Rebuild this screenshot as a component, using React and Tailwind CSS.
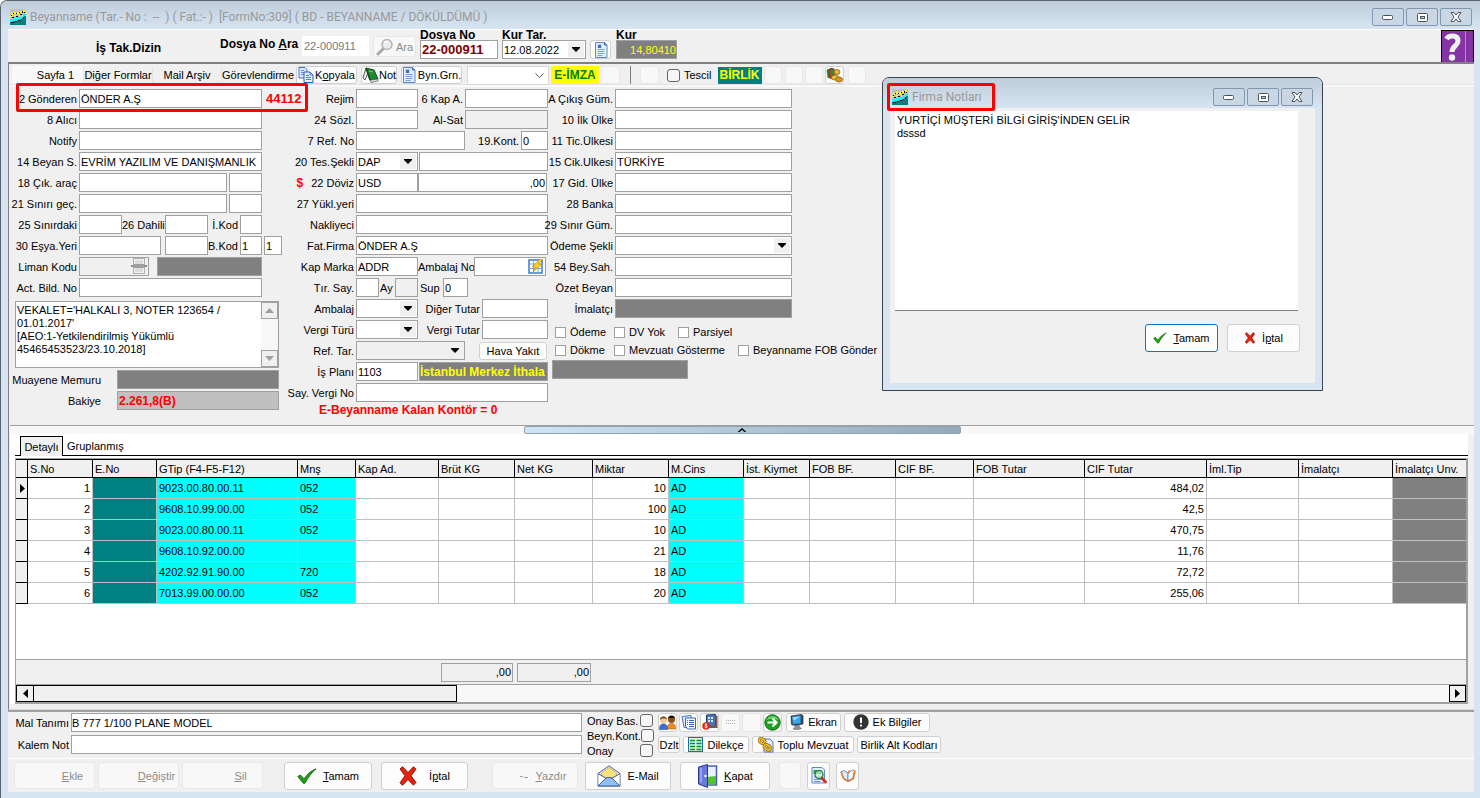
import React from 'react';
import clsx from 'clsx';

const columns = [
  { key: 'sno', title: 'S.No', width: 'w-[65px]', align: 'text-right' },
  { key: 'eno', title: 'E.No', width: 'w-[64px]', fill: 'bg-[#008080]' },
  { key: 'gtip', title: 'GTip (F4-F5-F12)', width: 'w-[141px]', fill: 'bg-[#00ffff]' },
  { key: 'mns', title: 'Mnş', width: 'w-[58px]', fill: 'bg-[#00ffff]' },
  { key: 'kap', title: 'Kap Ad.', width: 'w-[83px]' },
  { key: 'brut', title: 'Brüt KG', width: 'w-[76px]' },
  { key: 'net', title: 'Net KG', width: 'w-[78px]' },
  { key: 'miktar', title: 'Miktar', width: 'w-[76px]', align: 'text-right' },
  { key: 'cins', title: 'M.Cins', width: 'w-[75px]', fill: 'bg-[#00ffff]' },
  { key: 'kiymet', title: 'İst. Kiymet', width: 'w-[66px]' },
  { key: 'fobbf', title: 'FOB BF.', width: 'w-[86px]' },
  { key: 'cifbf', title: 'CIF BF.', width: 'w-[78px]' },
  { key: 'fob', title: 'FOB Tutar', width: 'w-[111px]' },
  { key: 'cif', title: 'CIF Tutar', width: 'w-[122px]', align: 'text-right' },
  { key: 'imltip', title: 'İml.Tip', width: 'w-[92px]' },
  { key: 'imalatci', title: 'İmalatçı', width: 'w-[94px]' },
  { key: 'unvan', title: 'İmalatçı Unv.', width: '', fill: 'bg-[#808080]' },
];

const rows = [
  { sno: 1, gtip: '9023.00.80.00.11', mns: '052', miktar: 10, cins: 'AD', cif: '484,02' },
  { sno: 2, gtip: '9608.10.99.00.00', mns: '052', miktar: 100, cins: 'AD', cif: '42,5' },
  { sno: 3, gtip: '9023.00.80.00.11', mns: '052', miktar: 10, cins: 'AD', cif: '470,75' },
  { sno: 4, gtip: '9608.10.92.00.00', mns: '', miktar: 21, cins: 'AD', cif: '11,76' },
  { sno: 5, gtip: '4202.92.91.90.00', mns: '720', miktar: 18, cins: 'AD', cif: '72,72' },
  { sno: 6, gtip: '7013.99.00.00.00', mns: '052', miktar: 20, cins: 'AD', cif: '255,06' },
];

/* ---------- icons ---------- */

function AppLogo() {
  return (
    <svg width="16" height="16" viewBox="0 0 16 16" shapeRendering="crispEdges" className="shrink-0">
      <rect width="16" height="16" fill="#c0c0c0" />
      <path d="M0 12h3v-1h4v-1h3V9h2V8h2V6h2v10H0z" fill="#008080" />
      <path d="M0 10h4V9h4V8h3V7h2V5h3v2h-2v2h-2v1h-2v1H7v1H3v1H0z" fill="#00ffff" />
      <path d="M1 4h2v2H1zM4 3h2v2H4zM7 3h2v2H7zM10 2h2v2h-2zM13 1h2v2h-2zM0 7h2v1H0zM4 6h2v1H4zM8 5h2v1H8z" fill="#ffff00" />
      <path d="M1 6h1v1H1zM3 4h1v1H3zM6 4h1v1H6zM9 3h1v1H9zM12 2h1v2h-1zM14 3h1v1h-1zM2 8h2v1H2zM6 7h2v1H6zM10 5h2v1h-2zM1 13h3v1H1zM5 12h2v1H5zM8 11h2v1H8zM11 10h1v1h-1zM13 8h1v2h-1z" fill="#000" />
    </svg>
  );
}

function Magnifier() {
  return (
    <svg width="18" height="18" viewBox="0 0 18 18" fill="none">
      <path d="M7.5 10.5L2 16" stroke="#a8a8a8" strokeWidth="3" strokeLinecap="round" />
      <circle cx="11" cy="6.5" r="5" fill="#ececec" stroke="#b4b4b4" strokeWidth="1.5" />
      <path d="M8.5 5.5a3 3 0 0 1 3-2" stroke="#fff" strokeWidth="1.5" />
    </svg>
  );
}

function CopyIcon() {
  return (
    <svg width="16" height="16" viewBox="0 0 16 16" fill="none">
      <path d="M1 .5h6l2 2V11H1z" fill="#dcebff" stroke="#3f6fc4" />
      <path d="M3 3.5h3M3 5.5h4M3 7.5h4" stroke="#5d90dc" />
      <path d="M6 5h6l3 3v7.5H6z" fill="#e8f2ff" stroke="#2d5cb8" />
      <path d="M12 5v3h3M8 8.5h3M8 10.5h5M8 12.5h5" stroke="#4a7fd4" />
    </svg>
  );
}

function BookIcon() {
  return (
    <svg width="17" height="16" viewBox="0 0 17 16">
      <path d="M4 1l8 2 4 9-8 1z" fill="#1e8a2c" stroke="#0b4f16" />
      <path d="M4 1L1 11l2 2 3-7z" fill="#f2f2f2" stroke="#555" />
      <path d="M8 13l8-1v2l-7 1.5z" fill="#ddd" stroke="#555" strokeWidth=".7" />
      <path d="M4 1l4 12" stroke="#0b4f16" strokeWidth="1.5" />
      <path d="M7 4l4 1" stroke="#7fd08a" />
    </svg>
  );
}

function DocIcon() {
  return (
    <svg width="14" height="16" viewBox="0 0 14 16" fill="none">
      <path d="M1.5.5h9L13 3v12.5H1.5z" fill="#e3efff" stroke="#5c86cc" />
      <path d="M10.5.5V3H13" stroke="#2f62bb" />
      <path d="M3.5 3h4M3.5 5h4M3.5 7.5h7M3.5 9.5h7M3.5 11.5h7M3.5 13.5h5" stroke="#7b9fdb" />
      <rect x="4" y="3" width="3" height="3" fill="#4570b8" />
    </svg>
  );
}

function PrintIcon() {
  return (
    <svg width="16" height="16" viewBox="0 0 16 16">
      <rect x="2.5" y=".5" width="11" height="15" fill="#f2f2f2" stroke="#b0b0b0" />
      <path d="M4 3h8M4 5h8M4 11h8M4 13h8" stroke="#c8c8c8" />
      <rect y="7" width="16" height="2" fill="#8c8c8c" />
      <rect x="3" y="6" width="10" height="4" fill="#a0a0a0" />
    </svg>
  );
}

function GridBoltIcon() {
  return (
    <svg width="16" height="15" viewBox="0 0 16 15">
      <rect x="1" y="1" width="13" height="13" fill="#fff" stroke="#3b78c8" strokeWidth="1.5" />
      <path d="M1 5h13M1 9.5h13M5.5 1v13M10 1v13" stroke="#7aa9e2" />
      <path d="M12 0L4 8h4l-3 5 9-8h-4l5-5z" fill="#ffd21c" stroke="#b97a00" strokeWidth=".6" />
    </svg>
  );
}

function MoneyIcon() {
  return (
    <svg width="17" height="15" viewBox="0 0 17 15">
      <path d="M1 2l5-2 1 8-5 2z" fill="#2c8c34" stroke="#15501b" strokeWidth=".6" />
      <path d="M3 1.5l5-1 1 9-5 1z" fill="#d33a26" stroke="#7c1c10" strokeWidth=".6" />
      <path d="M4.5 2l3-.5.7 7-3 .8z" fill="#2c8c34" />
      <ellipse cx="11" cy="4" rx="3" ry="2.5" fill="#e9b63a" stroke="#7a5204" strokeWidth=".7" />
      <ellipse cx="9" cy="9.5" rx="3.5" ry="2.5" fill="#f0bd3c" stroke="#7a5204" strokeWidth=".7" />
      <ellipse cx="13" cy="11.5" rx="3.5" ry="2.5" fill="#d99a1c" stroke="#7a5204" strokeWidth=".7" />
    </svg>
  );
}

function UsersIcon() {
  return (
    <svg width="17" height="15" viewBox="0 0 17 15">
      <circle cx="12.5" cy="4.5" r="3.5" fill="#8a4f22" />
      <path d="M9 4a3.5 3.5 0 0 1 7 0l-1-1h-5z" fill="#1c1208" />
      <path d="M8.5 14c0-4 1-5.5 4-5.5s4 1.5 4 5.5z" fill="#ef8a1d" stroke="#a65706" strokeWidth=".5" />
      <circle cx="4.5" cy="5" r="3.5" fill="#f6c79a" />
      <path d="M1 5a3.5 3.5 0 0 1 7 0L7 3.5H3z" fill="#7c4414" />
      <path d="M.5 14.5c0-4 1-5.5 4-5.5s4 1.5 4 5.5z" fill="#3c6fd2" stroke="#1d428f" strokeWidth=".5" />
    </svg>
  );
}

function ListDocsIcon() {
  return (
    <svg width="16" height="15" viewBox="0 0 16 15" fill="none">
      <path d="M1 1.5l9-1 1 11-8 1z" fill="#dfeaff" stroke="#4573c6" />
      <path d="M4.5 3h10v11h-8l-2-3z" fill="#f4f8ff" stroke="#3a66b8" />
      <path d="M8 5.5h5M8 7.5h5M8 9.5h5M8 11.5h5" stroke="#3a66b8" />
      <path d="M6 5.5h1M6 7.5h1M6 9.5h1" stroke="#3a66b8" />
    </svg>
  );
}

function SafeIcon() {
  return (
    <svg width="16" height="16" viewBox="0 0 16 16">
      <path d="M4.5 1l9-.5V12l-9 1z" fill="#4d74b4" stroke="#223f74" />
      <path d="M6 3h2v2H6zM9 3h2v2H9zM6 6h2v2H6zM9 6h2v2H9z" fill="#dbe8ff" />
      <path d="M13.5 1l2 1v12H6l1-1.5 6.5-.5z" fill="#7b5a4c" />
      <circle cx="4" cy="12" r="3.7" fill="#e02214" />
      <path d="M5.3 10.5c-1-.8-2.6-.4-2.5.5.2 1 2.5.6 2.5 1.7s-1.9 1.2-2.7.4M4 9.5v5" stroke="#fff" fill="none" strokeWidth=".8" />
    </svg>
  );
}

function GoIcon() {
  return (
    <svg width="17" height="17" viewBox="0 0 17 17">
      <circle cx="8.5" cy="8.5" r="7.7" fill="#1fa01f" stroke="#0d6a12" />
      <path d="M2.5 6a6.5 6.5 0 0 1 12 0c-4-2-8-2-12 0z" fill="#6fd06a" />
      <path d="M3.5 8.5H12M8.5 4.5l4 4-4 4" stroke="#fff" strokeWidth="2.2" fill="none" />
    </svg>
  );
}

function MonitorIcon() {
  return (
    <svg width="14" height="16" viewBox="0 0 14 16">
      <path d="M1 2l10-1.5 2 1V10l-8 1.5-3.5-1z" fill="#3c4c60" stroke="#1d2b3c" strokeWidth=".7" />
      <path d="M2 2.8l8.5-1.3v7.7L3 10z" fill="#35a8f0" />
      <path d="M2.5 3.5l7.5-1-6 4z" fill="#9fdcff" />
      <path d="M6 11.5l3-.5 1 2.5 1.5 1-4 1.5L3 15z" fill="#8a949e" stroke="#56626f" strokeWidth=".5" />
    </svg>
  );
}

function AlertIcon() {
  return (
    <svg width="16" height="16" viewBox="0 0 16 16">
      <circle cx="8" cy="8" r="7.7" fill="#333" />
      <path d="M7 3.5h2V9H7zM7 10.5h2v2H7z" fill="#fff" />
    </svg>
  );
}

function ColumnsIcon() {
  return (
    <svg width="15" height="15" viewBox="0 0 15 15">
      <rect x=".5" y=".5" width="14" height="14" fill="#d9f7dc" stroke="#1f6f9a" />
      <path d="M2 3.5h5M2 6.5h5M2 9.5h5M2 12.5h5M8.500 3.500h5M8.500 6.500h5M8.500 9.500h5M8.500 12.500h5" stroke="#148a2a" strokeWidth="1.5" />
    </svg>
  );
}

function LinksIcon() {
  return (
    <svg width="16" height="16" viewBox="0 0 16 16" fill="none">
      <path d="M6 2h6l3 3v10H6z" fill="#e4edff" stroke="#4b77c4" />
      <path d="M9 8h4M9 10.5h4M9 13h4" stroke="#7fa4e0" />
      <rect x="1" y="2" width="6" height="4" rx="2" transform="rotate(35 4 4)" stroke="#8a6200" strokeWidth="3" />
      <rect x="1" y="2" width="6" height="4" rx="2" transform="rotate(35 4 4)" stroke="#f2bd20" strokeWidth="1.8" />
      <rect x="6" y="8" width="7" height="4" rx="2" transform="rotate(35 9 10)" stroke="#8a6200" strokeWidth="3" />
      <rect x="6" y="8" width="7" height="4" rx="2" transform="rotate(35 9 10)" stroke="#f2bd20" strokeWidth="1.8" />
    </svg>
  );
}

function CheckIcon({ className }) {
  return (
    <svg viewBox="0 0 20 16" className={className}>
      <path d="M.8 8.5L3.5 7 7 11C10 6.5 14 2.5 19 .8 14.5 4.8 10.5 10 8 15.3H6.3z" fill="#22a016" stroke="#0e5a0a" strokeWidth=".8" />
    </svg>
  );
}

function CrossIcon({ className }) {
  return (
    <svg viewBox="0 0 18 20" className={className}>
      <path d="M1 3L3.500.7 9 6.500 14.500.8 17 3.200 12 9.800l5 6.700-2.600 2.700L9 13.500l-5.500 5.800L1 16.800l5-7z" fill="#e8200c" stroke="#7e0f06" strokeWidth=".9" strokeLinejoin="round" />
    </svg>
  );
}

function EnvelopeIcon() {
  return (
    <svg width="24" height="22" viewBox="0 0 24 22">
      <path d="M1 8.5L12 .8l11 7.700V21H1z" fill="#e8eefc" stroke="#4a5f9c" />
      <path d="M4.500 8L12 2.500 19.500 8v4L12 16l-7.500-4z" fill="#fbe27a" stroke="#c89f24" strokeWidth=".6" />
      <path d="M1.500 9.500V20l7-6.500zM22.500 9.500V20l-7-6.500z" fill="#fff" />
      <path d="M1 21l8.500-8.500h5L23 21z" fill="#8fc1f4" stroke="#4a5f9c" />
      <path d="M1 8.500l8.500 5M23 8.500l-8.500 5" stroke="#4a5f9c" fill="none" />
    </svg>
  );
}

function DoorIcon() {
  return (
    <svg width="21" height="24" viewBox="0 0 21 24">
      <rect x="9" y="2" width="10.5" height="19" fill="#e6f1ff" stroke="#4560b0" strokeWidth="1.5" />
      <path d="M10 13l9-1v8.500h-9z" fill="#52c234" />
      <path d="M1.500 3L10.500.5v23L1.500 20z" fill="#6a78dc" stroke="#2b3790" />
      <path d="M3 4.500l2-.5v15l-2-.8z" fill="#97a3f2" />
      <circle cx="8.5" cy="12" r="1.2" fill="#fff" />
    </svg>
  );
}

function FindDocIcon() {
  return (
    <svg width="16" height="17" viewBox="0 0 16 17">
      <path d="M1 .5h10L13.500 3v13H1z" fill="#e4eeff" stroke="#5d86cc" />
      <path d="M3 10h8M3 12.500h8M3 14.500h6" stroke="#6f97d8" />
      <path d="M2.500 3h8v4h-8z" fill="#2e9c4a" />
      <path d="M10.500 10.500l4 4.500" stroke="#d2381e" strokeWidth="3" strokeLinecap="round" />
      <circle cx="8" cy="7.5" r="4" fill="#bdeccb" fillOpacity=".7" stroke="#20703a" strokeWidth="1.2" />
    </svg>
  );
}

function OpenBookIcon() {
  return (
    <svg width="16" height="13" viewBox="0 0 16 13">
      <path d="M1 3l3-1.500 4 2.500v8L3.500 9z" fill="#dceafa" stroke="#5289cc" strokeWidth=".9" />
      <path d="M8 4l4.500-3 2 .8L13 9l-5 3z" fill="#f7fbff" stroke="#5289cc" strokeWidth=".9" />
      <path d="M1 2.500l2.500 7L8 12.500l5.500-3 1.500-8M9.500 1.500l-1.500 3" stroke="#e8762c" strokeWidth="1.5" fill="none" />
    </svg>
  );
}

function HelpIcon() {
  return (
    <svg width="33" height="33" viewBox="0 0 33 33">
      <rect x=".5" y=".5" width="32" height="32" fill="#8434a4" stroke="#000" />
      <path d="M24.500 1v31" stroke="#b98acb" />
      <path d="M5.500 9C8 5 17 4.500 17 11c0 5-6 5-6 11" stroke="#f0f0f0" strokeWidth="5" fill="none" />
      <circle cx="11" cy="27.500" r="3.2" fill="#f0f0f0" />
    </svg>
  );
}

/* ---------- small controls ---------- */

function Field({ className, ...props }) {
  return (
    <input
      type="text"
      className={clsx('h-[19px] min-w-0 shrink-0 border border-[#a0a0a0] leading-4 outline-none', className)}
      {...props}
    />
  );
}

function Combo({ id, value, className, label }) {
  return (
    <span className={clsx('relative block h-[19px] shrink-0 border border-[#a0a0a0]', className)}>
      <select
        id={id}
        aria-label={label}
        defaultValue={value}
        className="block size-full appearance-none bg-transparent pl-px leading-4 outline-none"
      >
        <option>{value}</option>
      </select>
      <span className="pointer-events-none absolute inset-y-px right-px flex w-4 items-center justify-center bg-[#f0f0f0]">
        <svg width="8" height="5" viewBox="0 0 8 5"><path d="M0 0h8v1L4 5 0 1z" /></svg>
      </span>
    </span>
  );
}

function Row({ id, label, labelClass, className, children }) {
  return (
    <div className={clsx('relative flex h-[19px] items-center', className)}>
      <label htmlFor={id} className={clsx('mr-0.5 flex shrink-0 justify-end whitespace-nowrap', labelClass)}>
        {label}
      </label>
      {children}
    </div>
  );
}

function Mid({ htmlFor, children }) {
  return (
    <label htmlFor={htmlFor} className="flex-1 whitespace-nowrap pr-0.5 text-right">
      {children}
    </label>
  );
}

function Btn({ className, disabled, children, ...props }) {
  return (
    <button
      type="button"
      disabled={disabled}
      className={clsx(
        'flex shrink-0 items-center justify-center whitespace-nowrap rounded-[3px] border [&>svg]:shrink-0',
        disabled ? 'border-[#e8e8e8] bg-[#f8f8f8] text-[#8c8c8c]' : 'bg-[#fdfdfd]',
        className
      )}
      {...props}
    >
      {children}
    </button>
  );
}

function Check({ label, className }) {
  return (
    <label className={clsx('flex items-center gap-1 whitespace-nowrap', className)}>
      <input type="checkbox" className="size-[11px] shrink-0 appearance-none border border-[#a0a0a0] bg-white" />
      {label}
    </label>
  );
}

function WindowButtons() {
  const box = 'flex h-[18px] w-8 items-center justify-center rounded-[2px] border border-[#8496b0] bg-[#c9d6e4]';
  return (
    <div className="flex gap-0.5">
      <button type="button" aria-label="Küçült" className={box}>
        <svg width="12" height="5"><rect x=".5" y=".5" width="10" height="4" rx="1" fill="#fff" stroke="#4c525c" /></svg>
      </button>
      <button type="button" aria-label="Büyüt" className={box}>
        <svg width="11" height="9">
          <rect x=".5" y=".5" width="10" height="8" rx="1" fill="#fff" stroke="#4c525c" />
          <rect x="3.5" y="3.5" width="4" height="2" fill="#c9d6e4" stroke="#4c525c" />
        </svg>
      </button>
      <button type="button" aria-label="Kapat" className={box}>
        <svg width="12" height="10" viewBox="0 0 12 10">
          <path d="M1 .5h3L6 3 8 .5h3L8 5l3 4.500H8L6 7 4 9.500H1L4 5z" fill="#fff" stroke="#4c525c" />
        </svg>
      </button>
    </div>
  );
}

/* ---------- sections ---------- */

function Header() {
  return (
    <header className="flex h-[33px] justify-between border-t border-white">
      <div className="flex items-start">
        <b className="ml-[88px] w-[124px] pt-2.5 text-[12px]">İş Tak.Dizin</b>
        <label htmlFor="ara" className="w-[82px] whitespace-nowrap pt-1.5 text-[12px] font-bold">
          Dosya No <u>A</u>ra
        </label>
        <input id="ara" defaultValue="22-000911" className="mt-1.5 h-5 w-[67px] bg-white px-0.5 text-[#777] outline-none" />
        <Btn disabled className="ml-1 mt-1.5 h-[21px] w-[43px] gap-0.5"><Magnifier />Ara</Btn>
        <div className="ml-1 flex w-[82px] flex-col">
          <label htmlFor="dosya" className="h-2.5 text-[12px] font-bold leading-[10px]">Dosya No</label>
          <Field id="dosya" defaultValue="22-000911" className="w-[78px] bg-white px-px text-[13px] font-bold text-[#800000]" />
        </div>
        <div className="flex w-[88px] flex-col">
          <label htmlFor="kurtar" className="h-2.5 text-[12px] font-bold leading-[10px]">Kur Tar.</label>
          <Combo id="kurtar" value="12.08.2022" className="w-[84px] bg-white" />
        </div>
        <Btn aria-label="Kur listesi" className="mt-2.5 h-[19px] w-[21px] border-[#d0d0d0]"><DocIcon /></Btn>
        <div className="ml-[5px] flex flex-col">
          <label htmlFor="kur" className="h-2.5 text-[12px] font-bold leading-[10px]">Kur</label>
          <Field id="kur" defaultValue="14,80410" className="w-[61px] bg-[#808080] text-right text-[#ffff00]" />
        </div>
      </div>
      <button type="button" aria-label="Yardım" className="h-[33px] w-[33px]"><HelpIcon /></button>
    </header>
  );
}

function TabRow() {
  return (
    <div className="flex h-5 items-center pt-0.5">
      <div role="tablist" className="flex h-full items-center">
        <button role="tab" type="button" className="ml-0.5 h-full w-[71px] bg-[#f9f9f9] pl-4">Sayfa 1</button>
        <button role="tab" type="button" className="w-[69px] whitespace-nowrap border-l border-[#e4e4e4]">Diğer Formlar</button>
        <button role="tab" type="button" className="w-[69px] border-l border-[#e4e4e4]">Mail Arşiv</button>
        <button role="tab" type="button" className="w-[70px] whitespace-nowrap border-l border-[#e4e4e4] text-left">Görevlendirme</button>
      </div>
      <Btn className="ml-[5px] h-[18px] w-[61px] gap-px border-[#d0d0d0]"><CopyIcon /><span>K<u>o</u>pyala</span></Btn>
      <Btn className="ml-1 h-[18px] w-9 border-[#d0d0d0]"><BookIcon />Not</Btn>
      <Btn className="ml-1 h-[18px] w-[61px] gap-0.5 border-[#d0d0d0]"><DocIcon />Byn.Grn.</Btn>
      <span className="relative ml-[5px] block h-[19px] w-[82px] shrink-0 border border-[#d8d8d8] bg-white">
        <select aria-label="Beyanname türü" className="block size-full appearance-none outline-none"><option></option></select>
        <svg className="pointer-events-none absolute right-1 top-1.5" width="9" height="6" fill="none" stroke="#555"><path d="M.5.5l4 4 4-4" /></svg>
      </span>
      <b className="ml-0.5 h-[18px] w-12 bg-[#ffff00] text-center text-[12px] leading-[18px] text-[#008000]">E-İMZA</b>
      <Btn disabled aria-label="Boş" className="ml-0.5 h-[18px] w-[19px]" />
      <i className="ml-2.5 h-[18px] w-px bg-[#808080]" />
      <Btn disabled aria-label="Boş" className="ml-[9px] h-[18px] w-[19px]" />
      <label className="ml-2 flex items-center gap-1">
        <input type="checkbox" className="size-[13px] shrink-0 appearance-none rounded-[3px] border border-[#666] bg-[#f6f6f6]" />
        Tescil
      </label>
      <b className="ml-1.5 h-[17px] w-11 bg-[#008080] text-center text-[12px] leading-[17px] text-[#ffff00]">BİRLİK</b>
      <Btn disabled aria-label="Boş" className="ml-0.5 h-[18px] w-[18px]" />
      <Btn disabled aria-label="Boş" className="ml-[3px] h-[18px] w-[18px]" />
      <Btn disabled aria-label="Boş" className="ml-0.5 h-[18px] w-[18px]" />
      <Btn aria-label="Ödemeler" className="ml-0.5 h-[18px] w-[19px] border-[#d0d0d0]"><MoneyIcon /></Btn>
      <Btn disabled aria-label="Boş" className="ml-1 h-[18px] w-[18px]" />
    </div>
  );
}

function LeftColumn() {
  const lw = 'w-[67px]';
  return (
    <div className="flex w-[269px] shrink-0 flex-col gap-0.5">
      <Row id="f2" label="2 Gönderen" labelClass={lw}>
        <Field id="f2" defaultValue="ÖNDER A.Ş" className="w-[183px] bg-white px-px" />
        <b className="ml-1 text-[13px] text-[#ff0000]">44112</b>
        <span className="pointer-events-none absolute -bottom-1 -top-1.5 left-1.5 z-10 w-[292px] rounded-[2px] border-3 border-[#ff0000]" />
      </Row>
      <Row id="f8" label="8 Alıcı" labelClass={lw}><Field id="f8" className="w-[183px] bg-white" /></Row>
      <Row id="fn" label="Notify" labelClass={lw}><Field id="fn" className="w-[183px] bg-white" /></Row>
      <Row id="f14" label="14 Beyan S." labelClass={lw}>
        <Field id="f14" defaultValue="EVRİM YAZILIM VE DANIŞMANLIK" className="w-[183px] bg-white px-px" />
      </Row>
      <Row id="f18" label="18 Çık. araç" labelClass={lw}>
        <Field id="f18" className="w-[148px] bg-white" />
        <Field aria-label="Çıkış ülke" className="ml-0.5 w-[33px] bg-white" />
      </Row>
      <Row id="f21" label="21 Sınırı geç." labelClass={lw}>
        <Field id="f21" className="w-[148px] bg-white" />
        <Field aria-label="Sınır ülke" className="ml-0.5 w-[33px] bg-white" />
      </Row>
      <Row id="f25" label="25 Sınırdaki" labelClass={lw}>
        <Field id="f25" className="w-[43px] bg-white" />
        <label htmlFor="f26" className="w-[43px] whitespace-nowrap">26 Dahili</label>
        <Field id="f26" className="w-[43px] bg-white" />
        <label htmlFor="ikod" className="w-8 pr-0.5 text-right">İ.Kod</label>
        <Field id="ikod" className="w-[22px] bg-white" />
      </Row>
      <Row id="f30" label="30 Eşya.Yeri" labelClass={lw}>
        <Field id="f30" className="w-[82px] bg-white" />
        <Field aria-label="Eşya yeri adı" className="ml-1 w-[43px] bg-white" />
        <label htmlFor="bkod" className="w-8 pr-0.5 text-right">B.Kod</label>
        <Field id="bkod" defaultValue="1" className="w-[22px] bg-white px-px" />
        <Field aria-label="B.Kod 2" defaultValue="1" className="ml-0.5 w-[18px] bg-white px-px" />
      </Row>
      <Row id="liman" label="Liman Kodu" labelClass={lw}>
        <span className="relative block">
          <Field id="liman" className="block w-[70px] bg-[#f0f0f0]" />
          <span className="absolute right-0.5 top-px"><PrintIcon /></span>
        </span>
        <Field aria-label="Liman" readOnly className="ml-2 w-[105px] bg-[#808080]" />
      </Row>
      <Row id="act" label="Act. Bild. No" labelClass={lw}><Field id="act" className="w-[183px] bg-white" /></Row>
      <div className="ml-[5px] mt-0.5 flex h-[67px] w-[264px] border border-[#a0a0a0] bg-white">
        <textarea
          aria-label="Vekalet"
          className="h-full flex-1 resize-none overflow-hidden pl-px pt-0.5 leading-[13px] outline-none"
          defaultValue={"VEKALET='HALKALI 3, NOTER 123654 /\n01.01.2017'\n[AEO:1-Yetkilendirilmiş Yükümlü\n45465453523/23.10.2018]"}
        />
        <div className="flex w-[17px] flex-col justify-between bg-[#f8f8f8]">
          <button type="button" aria-label="Yukarı" className="flex h-[17px] items-center justify-center border border-[#a0a0a0] bg-[#f0f0f0]">
            <svg width="9" height="5"><path d="M0 5l4.500-5L9 5z" fill="#a0a0a0" /></svg>
          </button>
          <button type="button" aria-label="Aşağı" className="flex h-[17px] items-center justify-center border border-[#a0a0a0] bg-[#f0f0f0]">
            <svg width="9" height="5"><path d="M0 0l4.500 5L9 0z" fill="#a0a0a0" /></svg>
          </button>
        </div>
      </div>
      <Row id="muayene" label="Muayene Memuru" labelClass="w-[91px]">
        <Field id="muayene" readOnly className="ml-3.5 w-[162px] bg-[#808080]" />
      </Row>
      <Row id="bakiye" label="Bakiye" labelClass="w-[91px]">
        <Field id="bakiye" readOnly defaultValue="2.261,8(B)" className="ml-3.5 w-[162px] bg-[#c0c0c0] px-px text-[12px] font-bold text-[#ff0000]" />
      </Row>
    </div>
  );
}

function MiddleColumn() {
  const lw = 'w-[75px]';
  return (
    <div className="flex w-[269px] shrink-0 flex-col gap-0.5">
      <Row id="rejim" label="Rejim" labelClass={lw}>
        <Field id="rejim" className="w-[62px] bg-white" />
        <Mid htmlFor="kapa">6 Kap A.</Mid>
        <Field id="kapa" className="w-[83px] bg-white" />
      </Row>
      <Row id="f24" label="24 Sözl." labelClass={lw}>
        <Field id="f24" className="w-[62px] bg-white" />
        <Mid htmlFor="alsat">Al-Sat</Mid>
        <Field id="alsat" className="w-[83px] bg-[#f0f0f0]" />
      </Row>
      <Row id="f7" label="7 Ref. No" labelClass={lw}>
        <Field id="f7" className="w-[109px] bg-white" />
        <Mid htmlFor="f19">19.Kont.</Mid>
        <Field id="f19" defaultValue="0" className="w-[27px] bg-white px-px" />
      </Row>
      <Row id="f20" label="20 Tes.Şekli" labelClass={lw}>
        <Combo id="f20" value="DAP" className="w-[62px] bg-white" />
        <Field aria-label="Teslim yeri" className="ml-px w-[129px] bg-white" />
      </Row>
      <Row id="f22" label={<><b className="mr-2 text-[12px] text-[#ff0000]">$</b>22 Döviz</>} labelClass={lw}>
        <Field id="f22" defaultValue="USD" className="w-[62px] bg-white px-px" />
        <Field aria-label="Döviz tutarı" defaultValue=",00" className="w-[129px] bg-white px-px text-right" />
      </Row>
      <Row id="f27" label="27 Yükl.yeri" labelClass={lw}><Field id="f27" className="w-48 bg-white" /></Row>
      <Row id="nak" label="Nakliyeci" labelClass={lw}><Field id="nak" className="w-48 bg-white" /></Row>
      <Row id="fat" label="Fat.Firma" labelClass={lw}><Field id="fat" defaultValue="ÖNDER A.Ş" className="w-48 bg-white px-px" /></Row>
      <Row id="marka" label="Kap Marka" labelClass={lw}>
        <Field id="marka" defaultValue="ADDR" className="w-[62px] bg-white px-px" />
        <label htmlFor="ambno" className="w-14 whitespace-nowrap">Ambalaj No</label>
        <span className="relative block">
          <Field id="ambno" className="block w-[72px] bg-white" />
          <button type="button" aria-label="Ambalaj seç" className="absolute right-0.5 top-0.5"><GridBoltIcon /></button>
        </span>
      </Row>
      <Row id="tir" label="Tır. Say." labelClass={lw}>
        <Field id="tir" className="w-[23px] bg-white" />
        <label htmlFor="ay" className="w-4 pl-px">Ay</label>
        <Field id="ay" className="w-[23px] bg-[#f0f0f0]" />
        <label htmlFor="sup" className="w-[25px] pl-0.5">Sup</label>
        <Field id="sup" defaultValue="0" className="w-[25px] bg-white px-px" />
      </Row>
      <Row id="amb" label="Ambalaj" labelClass={lw}>
        <Combo id="amb" value="" className="w-[62px] bg-white" />
        <Mid htmlFor="diger">Diğer Tutar</Mid>
        <Field id="diger" className="w-[66px] bg-white" />
      </Row>
      <Row id="vturu" label="Vergi Türü" labelClass={lw}>
        <Combo id="vturu" value="" className="w-[62px] bg-white" />
        <Mid htmlFor="vtutar">Vergi Tutar</Mid>
        <Field id="vtutar" className="w-[66px] bg-white" />
      </Row>
      <Row id="reftar" label="Ref. Tar." labelClass={lw}>
        <Combo id="reftar" value="" className="w-[109px] bg-[#f0f0f0]" />
        <Btn className="ml-3.5 h-[18px] w-[68px] border-[#d0d0d0]">Hava Yakıt</Btn>
      </Row>
      <Row id="plan" label="İş Planı" labelClass={lw}>
        <Field id="plan" defaultValue="1103" className="w-[62px] bg-white px-px" />
        <Field aria-label="İş planı adı" readOnly defaultValue="İstanbul Merkez İthala" className="ml-px w-[129px] bg-[#808080] text-[12px] font-bold text-[#ffff00]" />
      </Row>
      <Row id="say" label="Say. Vergi No" labelClass={lw}><Field id="say" className="w-48 bg-white" /></Row>
      <b className="ml-10 whitespace-nowrap text-[12px] leading-3 text-[#ff0000]">E-Beyanname Kalan Kontör = 0</b>
    </div>
  );
}

function RightColumn() {
  const lw = 'w-[65px]';
  const w = 'w-[177px] bg-white';
  return (
    <div className="flex shrink-0 flex-col gap-0.5">
      <Row id="acik" label="A Çıkış Güm." labelClass={lw}><Field id="acik" className={w} /></Row>
      <Row id="f10" label="10 İlk Ülke" labelClass={lw}><Field id="f10" className={w} /></Row>
      <Row id="f11" label="11 Tic.Ülkesi" labelClass={lw}><Field id="f11" className={w} /></Row>
      <Row id="f15" label="15 Cik.Ulkesi" labelClass={lw}>
        <Field id="f15" defaultValue="TÜRKİYE" className="w-[177px] bg-white px-px" />
      </Row>
      <Row id="f17" label="17 Gid. Ülke" labelClass={lw}><Field id="f17" className={w} /></Row>
      <Row id="f28" label="28 Banka" labelClass={lw}><Field id="f28" className={w} /></Row>
      <Row id="f29" label="29 Sınır Güm." labelClass={lw}><Field id="f29" className={w} /></Row>
      <Row id="odeme" label="Ödeme Şekli" labelClass={lw}><Combo id="odeme" value="" className={w} /></Row>
      <Row id="f54" label="54 Bey.Sah." labelClass={lw}><Field id="f54" className={w} /></Row>
      <Row id="ozet" label="Özet Beyan" labelClass={lw}><Field id="ozet" className={w} /></Row>
      <Row id="imal" label="İmalatçı" labelClass={lw}>
        <Field id="imal" readOnly className="w-[177px] bg-[#808080]" />
      </Row>
      <div className="ml-[7px] mt-1 flex h-4">
        <Check label="Ödeme" className="w-[59px]" />
        <Check label="DV Yok" className="w-16" />
        <Check label="Parsiyel" />
      </div>
      <div className="ml-[7px] flex h-4">
        <Check label="Dökme" className="w-[59px]" />
        <Check label="Mevzuatı Gösterme" className="w-[124px]" />
        <Check label="Beyanname FOB Gönder" />
      </div>
      <Field aria-label="Plan açıklaması" readOnly className="ml-1 w-[136px] bg-[#808080]" />
    </div>
  );
}

function NotesWindow() {
  return (
    <section className="absolute left-[881px] top-[76px] z-20 flex h-[314px] w-[441px] flex-col rounded-t-[7px] border border-[#3c4450] bg-[#d7e4f2] px-[7px] pb-[7px]">
      <div className="-mx-[7px] flex h-[30px] items-center justify-between rounded-t-[6px] bg-linear-to-b from-[#bfcddb] to-[#d7e4f2] pl-[9px] pr-[9px] pt-2">
        <div className="relative flex items-center gap-1 font-[Roboto,'Open_Sans',sans-serif] text-[12px] text-[#999]">
          <AppLogo />
          Firma Notları
          <span className="pointer-events-none absolute -left-[5px] -top-[6px] h-[28px] w-[108px] rounded-[2px] border-3 border-[#ff0000]" />
        </div>
        <WindowButtons />
      </div>
      <div className="flex flex-1 flex-col bg-[#f0f0f0] px-[5px] pt-[3px]">
        <textarea
          aria-label="Firma notu"
          className="mr-3 h-[200px] resize-none border-b border-[#808080] bg-white pl-0.5 pt-[3px] leading-[13px] outline-none"
          defaultValue={"YURTİÇİ MÜŞTERİ BİLGİ GİRİŞ'İNDEN GELİR\ndsssd"}
        />
        <div className="mr-2.5 mt-[13px] flex justify-end gap-[9px]">
          <Btn className="h-7 w-[73px] gap-1.5 border-[#0078d4]"><CheckIcon className="h-3 w-[14px]" /><span><u>T</u>amam</span></Btn>
          <Btn className="h-7 w-[73px] gap-1.5 border-[#d0d0d0]"><CrossIcon className="h-3 w-3" /><span>İ<u>p</u>tal</span></Btn>
        </div>
      </div>
    </section>
  );
}

function ItemTable() {
  return (
    <table className="w-full table-fixed border-separate border-spacing-0">
      <colgroup>
        <col className="w-3" />
        {columns.map((c) => <col key={c.key} className={c.width} />)}
      </colgroup>
      <thead>
        <tr className="h-[19px]">
          <th className="border-b border-r border-t border-black bg-[#f0f0f0] p-0" />
          {columns.map((c) => (
            <th key={c.key} className="whitespace-nowrap border-b border-r border-t border-black bg-[#f0f0f0] p-0 pl-0.5 text-left font-normal leading-4 last:border-r-0">
              {c.title}
            </th>
          ))}
        </tr>
      </thead>
      <tbody>
        {rows.map((r, i) => (
          <tr key={r.sno} className="h-[21px]">
            <td className="border-b border-r border-black bg-[#f0f0f0] p-0 pl-1">
              {i === 0 && <svg width="5" height="9"><path d="M0 0l5 4.500L0 9z" /></svg>}
            </td>
            {columns.map((c) => (
              <td
                key={c.key}
                className={clsx('border-b border-r border-[#c0c0c0] p-0 px-0.5 leading-4 last:border-r-0', c.align, c.fill)}
              >
                {r[c.key]}
              </td>
            ))}
          </tr>
        ))}
      </tbody>
    </table>
  );
}

function ItemGrid() {
  return (
    <section className="mr-1.5 flex flex-1 flex-col bg-white pl-[5px] pt-0.5">
      <div role="tablist" className="flex h-5 items-end border-b border-black pl-[5px]">
        <button role="tab" type="button" className="-mb-px h-5 w-[43px] border border-b-0 border-black bg-[#f0f0f0]">Detaylı</button>
        <button role="tab" type="button" className="h-[18px] px-1">Gruplanmış</button>
      </div>
      <div className="mt-0.5 flex flex-1 flex-col border-b-2 border-l border-r-2 border-t border-[#a0a0a0]">
        <div className="flex-1"><ItemTable /></div>
        <div className="flex h-[26px] items-center gap-1 border-y border-[#a0a0a0] bg-[#f0f0f0] pl-[425px]">
          <Field aria-label="Brüt toplam" readOnly defaultValue=",00" className="w-[72px] px-px text-right" />
          <Field aria-label="Net toplam" readOnly defaultValue=",00" className="w-[74px] px-px text-right" />
        </div>
        <div className="flex h-[17px] justify-between bg-[#f8f8f8]">
          <button type="button" aria-label="Sola" className="flex w-[18px] items-center justify-center border border-black bg-[#f0f0f0]">
            <svg width="5" height="9"><path d="M5 0L0 4.500 5 9z" /></svg>
          </button>
          <div className="-ml-px w-[424px] border border-black bg-[#f0f0f0]" />
          <div className="flex-1" />
          <button type="button" aria-label="Sağa" className="flex w-[17px] items-center justify-center border border-black bg-[#f0f0f0]">
            <svg width="5" height="9"><path d="M0 0l5 4.500L0 9z" /></svg>
          </button>
        </div>
      </div>
    </section>
  );
}

function ApproveCheck({ label }) {
  return (
    <label className="flex h-[15px] w-[66px] items-center justify-between whitespace-nowrap">
      {label}
      <input type="checkbox" className="size-[13px] shrink-0 appearance-none rounded-[3px] border border-[#666] bg-[#f6f6f6]" />
    </label>
  );
}

function DetailPanel() {
  return (
    <section className="flex h-12 border-t-2 border-[#a0a0a0] pt-px">
      <div className="flex flex-col gap-[3px]">
        <Row id="mal" label="Mal Tanımı" labelClass="w-[61px]">
          <Field id="mal" defaultValue="B 777 1/100 PLANE MODEL" className="w-[511px] bg-white" />
        </Row>
        <Row id="kalem" label="Kalem Not" labelClass="w-[61px]"><Field id="kalem" className="w-[511px] bg-white" /></Row>
      </div>
      <div className="ml-[5px] flex flex-col">
        <ApproveCheck label="Onay Bas." />
        <ApproveCheck label="Beyn.Kont." />
        <ApproveCheck label="Onay" />
      </div>
      <div className="ml-[5px] flex flex-col gap-[5px]">
        <div className="flex h-[18px] items-center gap-0.5">
          <Btn aria-label="Kullanıcılar" className="h-[19px] w-[19px] border-[#d0d0d0]"><UsersIcon /></Btn>
          <Btn aria-label="Liste" className="h-[19px] w-[19px] border-[#d0d0d0]"><ListDocsIcon /></Btn>
          <Btn aria-label="Kasa" className="h-[19px] w-[19px] border-[#d0d0d0]"><SafeIcon /></Btn>
          <Btn disabled aria-label="Diğer" className="h-[19px] w-[19px]">
            <svg width="10" height="4"><path d="M0 .5h10M0 3.500h10" stroke="#b0b0b0" strokeDasharray="1 1" /></svg>
          </Btn>
          <Btn disabled aria-label="Boş" className="h-[19px] w-[19px]" />
          <Btn aria-label="Git" className="h-[19px] w-[19px] border-[#d0d0d0]"><GoIcon /></Btn>
          <Btn className="ml-0.5 h-[19px] w-[55px] gap-1 border-[#d0d0d0]"><MonitorIcon />Ekran</Btn>
          <Btn className="ml-px h-[19px] w-[86px] gap-1 border-[#d0d0d0]"><AlertIcon />Ek Bilgiler</Btn>
        </div>
        <div className="flex gap-[3px]">
          <Btn className="h-[17px] w-[22px] border-[#d0d0d0]">Dzlt</Btn>
          <Btn className="h-[17px] w-[66px] gap-1 border-[#d0d0d0]"><ColumnsIcon />Dilekçe</Btn>
          <Btn className="h-[17px] w-[102px] gap-1 border-[#d0d0d0]"><LinksIcon />Toplu Mevzuat</Btn>
          <Btn className="h-[17px] w-[84px] border-[#d0d0d0]">Birlik Alt Kodları</Btn>
        </div>
      </div>
    </section>
  );
}

function ActionBar() {
  return (
    <footer className="flex h-[34px] items-center gap-[3px] border-t border-white pl-1.5">
      <Btn disabled className="h-[27px] w-[81px] pl-9"><span><u>E</u>kle</span></Btn>
      <Btn disabled className="h-[27px] w-[81px] pl-9"><span><u>D</u>eğiştir</span></Btn>
      <Btn disabled className="h-[27px] w-[81px] pl-9"><span><u>S</u>il</span></Btn>
      <Btn className="ml-[18px] h-7 w-[88px] gap-1.5 border-[#d0d0d0]"><CheckIcon className="h-4 w-5" /><span><u>T</u>amam</span></Btn>
      <Btn className="ml-1.5 h-7 w-[87px] gap-3 border-[#d0d0d0]"><CrossIcon className="h-5 w-[18px]" /><span>İ<u>p</u>tal</span></Btn>
      <Btn disabled className="ml-[21px] h-[27px] w-[86px] gap-2 pl-4">
        <svg width="8" height="5"><path d="M0 3.500h3M4 4.500h4" stroke="#a0a0a0" /></svg>
        <span><u>Y</u>azdır</span>
      </Btn>
      <Btn className="ml-1 h-7 w-[86px] gap-1.5 border-[#d0d0d0]"><EnvelopeIcon />E-Mail</Btn>
      <Btn className="ml-1.5 h-7 w-[90px] gap-1.5 border-[#d0d0d0]"><DoorIcon /><span><u>K</u>apat</span></Btn>
      <Btn disabled aria-label="Boş" className="ml-1.5 h-[27px] w-[22px]" />
      <Btn aria-label="Belge ara" className="ml-[3px] h-7 w-[23px] border-[#d0d0d0]"><FindDocIcon /></Btn>
      <Btn aria-label="Mevzuat" className="ml-[3px] h-7 w-[23px] border-[#d0d0d0]"><OpenBookIcon /></Btn>
    </footer>
  );
}

export default function App() {
  return (
    <div className="relative flex min-h-screen flex-col overflow-hidden rounded-tl-[7px] border-l border-t border-[#5a6470] bg-[#d7e4f2] pb-1.5 pl-[7px] pr-1.5 font-['Liberation_Sans',sans-serif] text-[11px] leading-4 text-black">
      {/* Title bar */}
      <div className="-ml-[7px] -mr-1.5 flex h-7 items-center justify-between bg-linear-to-b from-[#bfcddb] to-[#d7e4f2] pl-[9px] pr-2 pt-1">
        <h1 className="flex items-center gap-1 whitespace-pre font-[Roboto,'Open_Sans',sans-serif] text-[12px] text-[#999]">
          <AppLogo />
          {'Beyanname (Tar.- No :  --  ) ( Fat.:- )  [FormNo:309] ( BD - BEYANNAME / DÖKÜLDÜMÜ )'}
        </h1>
        <WindowButtons />
      </div>

      <div className="flex flex-1 flex-col bg-[#f0f0f0]">
        <Header />

        {/* Main panel */}
        <main className="flex flex-1 flex-col border-l border-t-2 border-[#808080] pl-px">
          <TabRow />
          <div className="h-[3px] border-t border-[#e4e4e4] bg-[#f9f9f9]" />
          <div className="flex h-[339px] border-b border-[#a0a0a0] pt-0.5">
            <LeftColumn />
            <MiddleColumn />
            <RightColumn />
          </div>
          <div className="h-2 bg-[#f8f8f8]">
            <button
              type="button"
              aria-label="Paneli daralt"
              className="mx-auto flex h-2 w-[437px] items-center justify-center rounded-[2px] border border-[#8fa3b3] bg-linear-to-r from-[#cfe6f4] to-[#93aabb]"
            >
              <svg width="8" height="4" fill="none" stroke="#000" strokeWidth="1.5"><path d="M.5 4l3.500-3 3.500 3" /></svg>
            </button>
          </div>
          <ItemGrid />
          <div className="h-1.5 border-b border-[#d8d8d8]" />
        </main>

        <DetailPanel />
        <ActionBar />
      </div>

      <NotesWindow />
    </div>
  );
}
